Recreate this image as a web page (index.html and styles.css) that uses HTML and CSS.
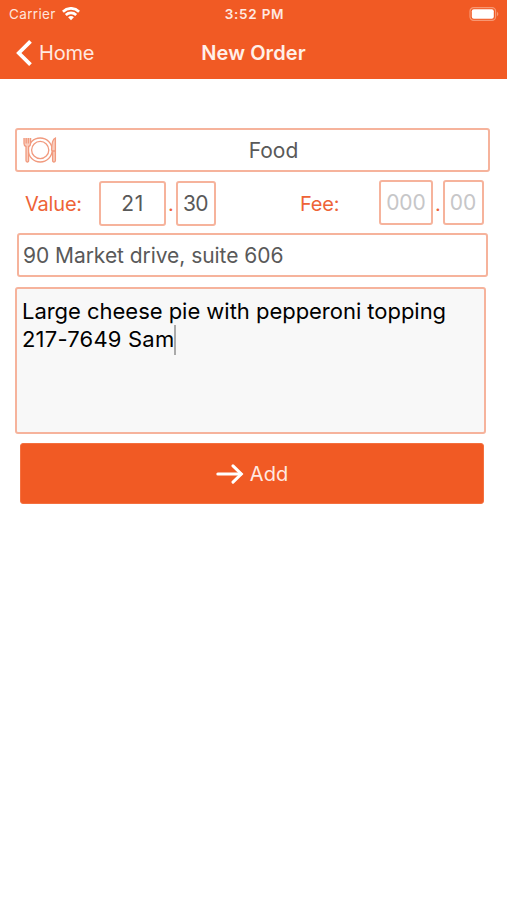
FILE: index.html
```html
<!DOCTYPE html>
<html lang="en">
<head>
    <meta charset="UTF-8">
    <meta name="viewport" content="width=device-width, initial-scale=1.0">
    <title>New Order</title>
    <link rel="stylesheet" href="styles.css">
</head>
<body>

    <header class="header">
        <div class="status-bar">
            <div class="carrier">
                <span>Carrier</span>
                <svg width="18" height="14" viewBox="0 0 18 14" fill="none" stroke="#fff" stroke-width="2.7">
                    <path d="M0.9 4.7C5.5 0.2 12.5 0.2 17.1 4.7"/>
                    <path d="M3.8 7.9C6.8 5.1 11.2 5.1 14.2 7.9"/>
                    <path d="M9 13.2L6.1 10.2C7.8 8.7 10.2 8.7 11.9 10.2Z" fill="#fff" stroke="none"/>
                </svg>
            </div>
            <div class="time">3:52 PM</div>
            <svg class="battery" width="31" height="14" viewBox="0 0 31 14">
                <rect x="1" y="0.7" width="25.6" height="12.6" rx="3.6" fill="none" stroke="#f79772" stroke-width="1.2"/>
                <rect x="2.8" y="2.3" width="22" height="9.4" rx="2" fill="#fff"/>
                <path d="M28 4.8C29.8 5.6 29.8 8.4 28 9.2Z" fill="#f79772"/>
            </svg>
        </div>
        <nav class="nav-bar">
            <a class="back">
                <svg width="17" height="28" viewBox="0 0 17 28" fill="none" stroke="#fff" stroke-width="3.8">
                    <path d="M15.5 2.3L3.8 14L15.5 25.7"/>
                </svg>
                <span>Home</span>
            </a>
            <h1 class="title">New Order</h1>
        </nav>
    </header>

    <main class="order-form">
        <div class="field category">
            <svg width="34" height="28" viewBox="0 0 34 28" fill="none" stroke="#f19a7e" stroke-width="1.3">
                <circle cx="17.2" cy="14" r="12"/>
                <circle cx="17.2" cy="14" r="8.6"/>
                <path class="cutlery" d="M1 2V7.5Q1 10 3 10.5V24.5Q3 26 4.3 26T5.6 24.5V10.5Q7.6 10 7.6 7.5V2M3.2 2V7.5M5.4 2V7.5"/>
                <path class="cutlery" d="M32.4 2V24.5Q32.4 26 31 26T29.6 24.5V15L28.6 14C28.6 8 29.6 3 32.4 2ZM29.6 15H32.4"/>
            </svg>
            <span class="category-name">Food</span>
        </div>

        <div class="amounts">
            <span class="label value-label">Value:</span>
            <div class="field amount value-whole">21</div>
            <span class="label point">.</span>
            <div class="field amount value-cents">30</div>
            <span class="label fee-label">Fee:</span>
            <div class="field amount empty fee-whole">000</div>
            <span class="label point">.</span>
            <div class="field amount empty fee-cents">00</div>
        </div>

        <div class="field address"><span>90 Market drive, suite 606</span></div>

        <div class="field notes">
            <div class="line-one">Large cheese pie with pepperoni topping</div>
            <div class="line-two"><span>217-7649 Sam</span><i class="caret"></i></div>
        </div>

        <button class="add-button">
            <svg width="28" height="20" viewBox="0 0 28 20" fill="none" stroke="#fff" stroke-width="3">
                <path d="M1.8 10H25" stroke-linecap="round"/>
                <path d="M17 1.9L25.3 10L17 18.1" stroke-linecap="round"/>
            </svg>
            <span>Add</span>
        </button>
    </main>

</body>
</html>
```

FILE: styles.css
```css
body {
    margin: 0;
    font-family: Inter, "Liberation Sans", sans-serif;
    background: #fff;
}
.header {
    height: 79px;
    background: #f15a24;
    color: #fff;
}
.status-bar {
    display: grid;
    grid-template-columns: 1fr auto 1fr;
    align-items: center;
    height: 27px;
    padding: 0 7px 0 9px;
    font-size: 13.5px;
}
.carrier {
    display: flex;
    align-items: center;
    gap: 6px;
    color: #ffe5dc;
    letter-spacing: 0.35px;
}
.time {
    font-weight: 600;
    font-size: 13.5px;
    letter-spacing: 0.75px;
    color: #ffe9e1;
}
.battery {
    justify-self: end;
}
.nav-bar {
    display: grid;
    grid-template-columns: 1fr auto 1fr;
    align-items: center;
    height: 51px;
    padding: 0 15px;
}
.back {
    display: flex;
    align-items: center;
    gap: 7px;
    font-size: 20px;
    letter-spacing: -0.2px;
    color: #ffe9e1;
}
.title {
    margin: 0;
    font-size: 20px;
    font-weight: 600;
    letter-spacing: 0.1px;
    color: #fff0e9;
}
.order-form {
    padding: 49px 17px 0 15px;
}
.field {
    box-sizing: border-box;
    border: 2px solid #f6b39c;
    border-radius: 3px;
    background: #fff;
    color: #595959;
    font-size: 21px;
}
.category {
    display: grid;
    grid-template-columns: 34px 1fr;
    align-items: center;
    height: 44px;
    padding-left: 6px;
}
.cutlery {
    fill: #f9cfc0;
}
.category-name {
    padding-left: 2px;
    text-align: center;
}
.amounts {
    display: flex;
    margin-top: 8px;
    height: 46px;
}
.label {
    color: #ee6337;
    font-size: 20px;
    line-height: 48px;
    letter-spacing: -0.2px;
}
.value-label {
    width: 84px;
    box-sizing: border-box;
    padding-left: 10px;
}
.amount {
    height: 45px;
    line-height: 41px;
    text-align: center;
}
.value-whole,
.value-cents {
    margin-top: 1px;
}
.value-whole {
    width: 67px;
    letter-spacing: 0.6px;
}
.value-cents {
    width: 40px;
    letter-spacing: -0.5px;
}
.point {
    width: 9.5px;
    text-align: center;
}
.fee-label {
    width: 163.5px;
    box-sizing: border-box;
    padding-left: 84.5px;
}
.fee-whole {
    width: 54px;
}
.fee-cents {
    width: 41px;
}
.empty {
    color: #c6c6c8;
}
.address {
    height: 44px;
    margin: 7px 2px 0 2px;
    padding-left: 4px;
    line-height: 41px;
    letter-spacing: -0.05px;
}
.notes {
    height: 147px;
    margin: 10px 4px 0 0;
    padding: 8px 5px;
    background: #f8f8f8;
    color: #000;
    font-size: 22px;
    line-height: 28px;
    letter-spacing: -0.03px;
}
.line-two {
    display: flex;
    letter-spacing: 0.2px;
}
.caret {
    width: 2px;
    height: 30px;
    background: #aaa;
}
.add-button {
    display: flex;
    align-items: center;
    justify-content: center;
    gap: 6px;
    width: 464px;
    height: 61px;
    margin: 9px 0 0 5px;
    padding: 0;
    border: 1px solid #f4703f;
    border-radius: 3px;
    background: #f15a24;
    color: #ffe9e1;
    font-family: inherit;
    font-size: 20px;
}
```
